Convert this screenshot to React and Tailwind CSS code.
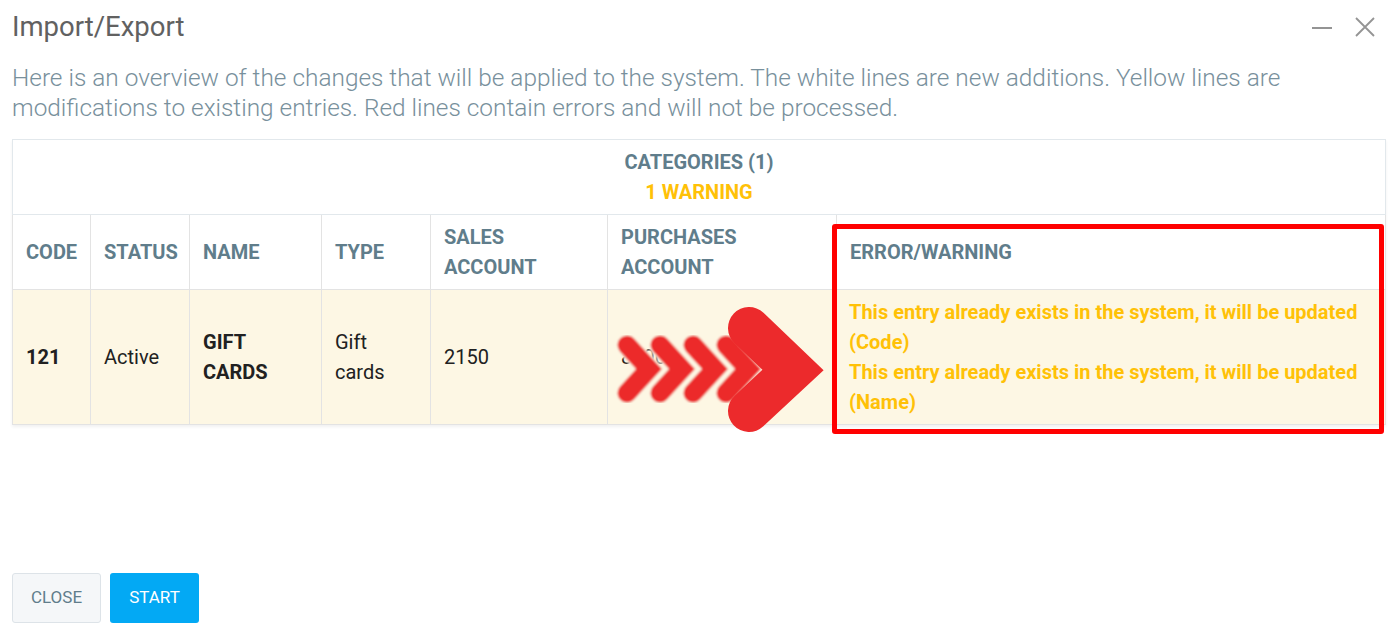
import React from "react"

const columns = [
  { key: "code", label: "CODE", width: 78 },
  { key: "status", label: "STATUS", width: 99 },
  { key: "name", label: "NAME", width: 132 },
  { key: "type", label: "TYPE", width: 109 },
  { key: "sales", label: "SALES ACCOUNT", width: 177 },
  { key: "purchases", label: "PURCHASES ACCOUNT", width: 229 },
  { key: "error", label: "ERROR/WARNING", width: 549 }
]

function Chevrons() {
  const small = [0, 33, 66, 99]
  return (
    <svg className="pointer-events-none absolute left-0 top-0" width="1391" height="633">
      <defs>
        <filter id="soft" x="-20%" y="-20%" width="140%" height="140%">
          <feGaussianBlur stdDeviation="0.9" />
        </filter>
      </defs>
      <g filter="url(#soft)">
        {small.map((dx) => (
          <g key={dx}>
            <path
              d={`M ${627 + dx} 345 L ${649 + dx} 369 L ${627 + dx} 393`}
              fill="none"
              stroke="#fdf7e4"
              strokeWidth="23"
              strokeLinecap="round"
            />
            <path
              d={`M ${627 + dx} 345 L ${649 + dx} 369 L ${627 + dx} 393`}
              fill="none"
              stroke="#ec2a2c"
              strokeWidth="19"
              strokeLinecap="round"
            />
          </g>
        ))}
      </g>
      <path
        d="M 749 328 L 793 370 L 749 411"
        fill="none"
        stroke="#ec2a2c"
        strokeWidth="42"
        strokeLinecap="round"
      />
    </svg>
  )
}

export default function App() {
  return (
    <div className="relative flex h-[633px] w-[1391px] flex-col overflow-hidden bg-white px-[12px] pb-[10px] font-['Roboto',sans-serif]">
      <div className="flex h-[42px] items-end justify-between pt-[12px]">
        <h1 className="text-[27.5px] leading-[30px] font-normal text-[#616161]">Import/Export</h1>
        <div className="flex h-[30px] items-center gap-[21px] pr-[3px]">
          <svg width="22" height="22" viewBox="0 0 22 22">
            <path d="M1 12 H21" stroke="#949494" strokeWidth="2" />
          </svg>
          <svg width="22" height="22" viewBox="0 0 22 22">
            <path d="M2 2 L20 20 M20 2 L2 20" stroke="#949494" strokeWidth="1.8" />
          </svg>
        </div>
      </div>

      <p className="mt-[21px] text-[24.4px] leading-[30px] font-light text-[#78909c]">
        Here is an overview of the changes that will be applied to the system. The white lines are new additions. Yellow lines are
        modifications to existing entries. Red lines contain errors and will not be processed.
      </p>

      <table className="mt-[16px] w-[1373px] table-fixed border-collapse text-[20px] leading-[30px] shadow-[0_2px_3px_rgba(0,0,0,0.06)]">
        <colgroup>
          {columns.map((col) => (
            <col key={col.key} style={{ width: col.width }} />
          ))}
        </colgroup>
        <thead>
          <tr>
            <th colSpan={7} className="border border-[#e2e8ec] py-[7px] text-center font-bold">
              <div className="text-[#607d8b]">CATEGORIES (1)</div>
              <div className="text-[#ffc107]">1 WARNING</div>
            </th>
          </tr>
          <tr className="h-[75px]">
            {columns.map((col) => (
              <th
                key={col.key}
                className="border border-[#e3e3e3] px-[13px] py-[7px] text-left align-middle font-bold text-[#607d8b]"
              >
                {col.label}
              </th>
            ))}
          </tr>
        </thead>
        <tbody>
          <tr className="h-[135px] bg-[#fdf7e4] text-[#212121]">
            <td className="border border-[#e3e3e3] px-[13px] py-[7px] font-bold">121</td>
            <td className="border border-[#e3e3e3] px-[13px] py-[7px]">Active</td>
            <td className="border border-[#e3e3e3] px-[13px] py-[7px] font-bold">GIFT CARDS</td>
            <td className="border border-[#e3e3e3] px-[13px] py-[7px]">Gift cards</td>
            <td className="border border-[#e3e3e3] px-[13px] py-[7px]">2150</td>
            <td className="border border-[#e3e3e3] px-[13px] py-[7px]">8100</td>
            <td className="border border-[#e3e3e3] px-[12px] py-[7px] font-bold text-[#ffc107]">
              <div>This entry already exists in the system, it will be updated (Code)</div>
              <div>This entry already exists in the system, it will be updated (Name)</div>
            </td>
          </tr>
        </tbody>
      </table>

      <div className="mt-auto flex gap-[9px]">
        <button
          type="button"
          className="h-[50px] w-[89px] rounded-[3px] border border-[#dde3e8] bg-[#f5f7f9] text-[17px] text-[#607d8b]"
        >
          CLOSE
        </button>
        <button type="button" className="h-[50px] w-[89px] rounded-[3px] bg-[#03a9f4] text-[17px] text-white">
          START
        </button>
      </div>

      <Chevrons />
      <div className="pointer-events-none absolute left-[832px] top-[224px] h-[210px] w-[552px] rounded-[3px] border-[5px] border-[#ff0000]" />
    </div>
  )
}
